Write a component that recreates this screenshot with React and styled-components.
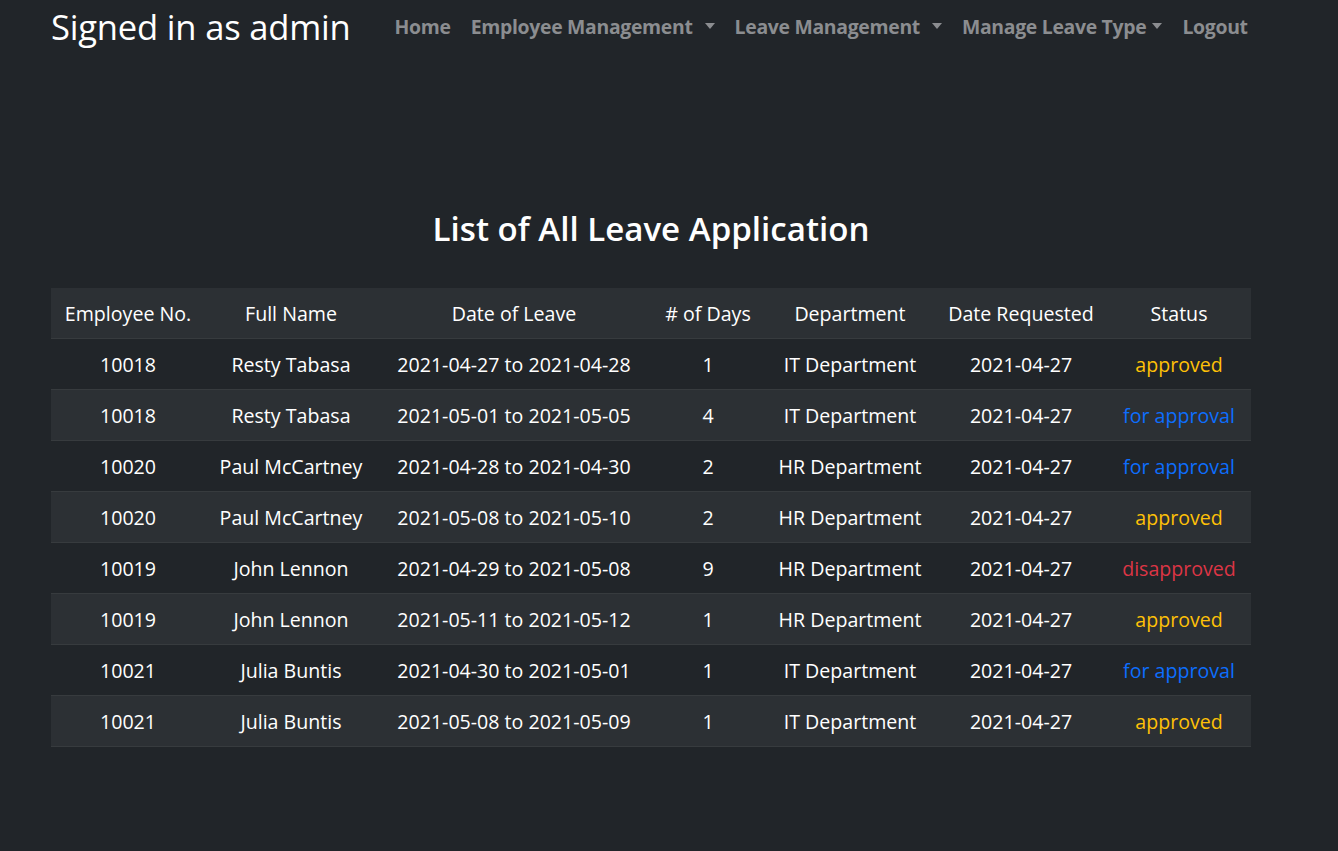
import React from 'react'
import styled, { createGlobalStyle } from 'styled-components'

const GlobalStyle = createGlobalStyle`
  html, body {
    margin: 0;
    padding: 0;
    background-color: #212529;
    color: #ffffff;
    font-family: "Open Sans", "Noto Sans", sans-serif;
  }
`

const Page = styled.div`
  min-height: 851px;
  padding: 0 51px;
  box-sizing: border-box;
`

const Navbar = styled.nav`
  display: flex;
  align-items: center;
  height: 54px;
`

const Brand = styled.a`
  font-size: 34.6px;
  font-weight: 400;
  color: #ffffff;
  text-decoration: none;
  margin-right: 44px;
  letter-spacing: -0.2px;
  line-height: 1;
`

const NavList = styled.ul`
  display: flex;
  align-items: center;
  gap: 20px;
  list-style: none;
  margin: 0 0 2px;
  padding: 0;
`

const NavLink = styled.a`
  display: flex;
  align-items: center;
  font-size: 19.4px;
  font-weight: 700;
  color: #8b8d90;
  text-decoration: none;
  letter-spacing: -0.3px;
`

const Caret = styled.span`
  display: inline-block;
  margin-left: ${props => (props.spaced ? '12px' : '6px')};
  width: 0;
  height: 0;
  border-top: 6px solid #8b8d90;
  border-left: 5px solid transparent;
  border-right: 5px solid transparent;
`

const Main = styled.main`
  width: 1200px;
`

const Title = styled.h1`
  margin: 155px 0 39px;
  text-align: center;
  font-size: 33.1px;
  font-weight: 600;
  line-height: 40px;
`

const Table = styled.table`
  width: 1200px;
  border-collapse: collapse;
  table-layout: fixed;
  font-size: 19.6px;
`

const HeadCell = styled.th`
  height: 50px;
  padding: 0;
  font-weight: 400;
  text-align: center;
  background-color: #2c3034;
  border-bottom: 1px solid #373b3e;
`

const Row = styled.tr`
  background-color: ${props => (props.striped ? '#2c3034' : '#212529')};
`

const Cell = styled.td`
  height: 50px;
  padding: 0;
  text-align: center;
  border-bottom: 1px solid #373b3e;
  color: ${props => props.tone || '#ffffff'};
  white-space: nowrap;
`

const statusColors = {
  approved: '#ffc107',
  'for approval': '#0d6efd',
  disapproved: '#dc3545',
}

const columns = [
  { label: 'Employee No.', width: 154 },
  { label: 'Full Name', width: 172 },
  { label: 'Date of Leave', width: 274 },
  { label: '# of Days', width: 114 },
  { label: 'Department', width: 170 },
  { label: 'Date Requested', width: 172 },
  { label: 'Status', width: 144 },
]

const leaves = [
  ['10018', 'Resty Tabasa', '2021-04-27 to 2021-04-28', '1', 'IT Department', '2021-04-27', 'approved'],
  ['10018', 'Resty Tabasa', '2021-05-01 to 2021-05-05', '4', 'IT Department', '2021-04-27', 'for approval'],
  ['10020', 'Paul McCartney', '2021-04-28 to 2021-04-30', '2', 'HR Department', '2021-04-27', 'for approval'],
  ['10020', 'Paul McCartney', '2021-05-08 to 2021-05-10', '2', 'HR Department', '2021-04-27', 'approved'],
  ['10019', 'John Lennon', '2021-04-29 to 2021-05-08', '9', 'HR Department', '2021-04-27', 'disapproved'],
  ['10019', 'John Lennon', '2021-05-11 to 2021-05-12', '1', 'HR Department', '2021-04-27', 'approved'],
  ['10021', 'Julia Buntis', '2021-04-30 to 2021-05-01', '1', 'IT Department', '2021-04-27', 'for approval'],
  ['10021', 'Julia Buntis', '2021-05-08 to 2021-05-09', '1', 'IT Department', '2021-04-27', 'approved'],
]

export default function App() {
  return (
    <>
      <GlobalStyle />
      <Page>
        <Navbar>
          <Brand href="#">Signed in as admin</Brand>
          <NavList>
            <li><NavLink href="#">Home</NavLink></li>
            <li><NavLink href="#">Employee Management<Caret spaced /></NavLink></li>
            <li><NavLink href="#">Leave Management<Caret spaced /></NavLink></li>
            <li><NavLink href="#">Manage Leave Type<Caret /></NavLink></li>
            <li><NavLink href="#">Logout</NavLink></li>
          </NavList>
        </Navbar>
        <Main>
          <Title>List of All Leave Application</Title>
          <Table>
            <colgroup>
              {columns.map(c => <col key={c.label} style={{ width: c.width }} />)}
            </colgroup>
            <thead>
              <tr>
                {columns.map(c => <HeadCell key={c.label}>{c.label}</HeadCell>)}
              </tr>
            </thead>
            <tbody>
              {leaves.map((row, i) => (
                <Row key={i} striped={i % 2 === 1}>
                  {row.slice(0, 6).map((value, j) => <Cell key={j}>{value}</Cell>)}
                  <Cell tone={statusColors[row[6]]}>{row[6]}</Cell>
                </Row>
              ))}
            </tbody>
          </Table>
        </Main>
      </Page>
    </>
  )
}
